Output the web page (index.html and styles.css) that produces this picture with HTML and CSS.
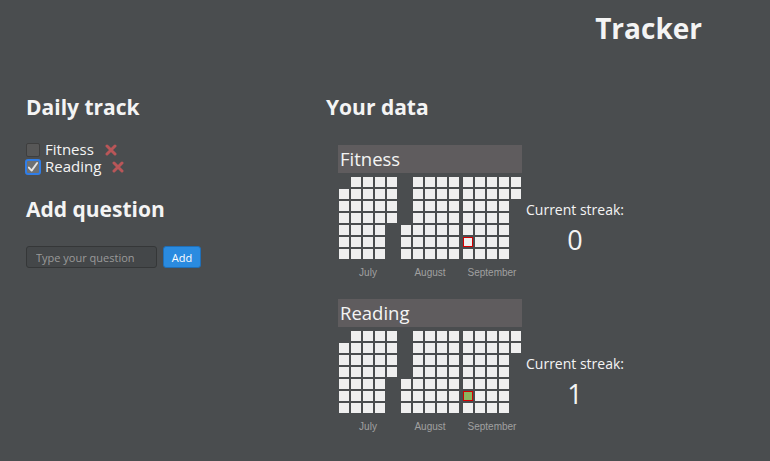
FILE: index.html
```html
<!DOCTYPE html>
<html>
<head>
<meta charset="utf-8">
<link rel="stylesheet" href="styles.css">
</head>
<body>
<header class="top">
  <h1 class="title">Tracker</h1>
</header>
<main class="main">
  <section class="left">
    <h2 class="heading">Daily track</h2>
    <ul class="items">
      <li class="item"><span class="box"></span><span class="item-label">Fitness</span><svg class="del" viewBox="0 0 12 12" width="12" height="12"><path d="M2 2 L10 10 M10 2 L2 10" stroke="#b95658" stroke-width="3" stroke-linecap="round"/></svg></li>
      <li class="item"><span class="box box-checked"><svg viewBox="0 0 14 14" width="14" height="14"><path d="M2.2 7.6 L5.4 11.2 L11.8 2.4" fill="none" stroke="#e6e6e6" stroke-width="2.2" stroke-linecap="round" stroke-linejoin="round"/></svg></span><span class="item-label">Reading</span><svg class="del" viewBox="0 0 12 12" width="12" height="12"><path d="M2 2 L10 10 M10 2 L2 10" stroke="#b95658" stroke-width="3" stroke-linecap="round"/></svg></li>
    </ul>
    <h2 class="heading heading-add">Add question</h2>
    <form class="add-form">
      <input class="q-input" type="text" placeholder="Type your question">
      <button class="add-btn" type="button">Add</button>
    </form>
  </section>
  <section class="right">
    <h2 class="heading">Your data</h2>
    <div class="chart-row">
      <div class="chart">
        <div class="chart-title">Fitness</div>
        <div class="months">
          <div class="month">
            <div class="grid">
              <i class="blank"></i>
              <i></i><i></i><i></i><i></i><i></i><i></i><i></i><i></i><i></i><i></i>
              <i></i><i></i><i></i><i></i><i></i><i></i><i></i><i></i><i></i><i></i>
              <i></i><i></i><i></i><i></i><i></i><i></i><i></i><i></i><i></i><i></i><i></i>
            </div>
            <div class="month-label">July</div>
          </div>
          <div class="month">
            <div class="grid">
              <i class="blank"></i><i class="blank"></i><i class="blank"></i><i class="blank"></i>
              <i></i><i></i><i></i><i></i><i></i><i></i><i></i><i></i><i></i><i></i>
              <i></i><i></i><i></i><i></i><i></i><i></i><i></i><i></i><i></i><i></i>
              <i></i><i></i><i></i><i></i><i></i><i></i><i></i><i></i><i></i><i></i><i></i>
            </div>
            <div class="month-label">August</div>
          </div>
          <div class="month">
            <div class="grid">
              <i></i><i></i><i></i><i></i><i></i><i class="today"></i><i></i><i></i><i></i><i></i>
              <i></i><i></i><i></i><i></i><i></i><i></i><i></i><i></i><i></i><i></i>
              <i></i><i></i><i></i><i></i><i></i><i></i><i></i><i></i><i></i><i></i>
            </div>
            <div class="month-label">September</div>
          </div>
        </div>
      </div>
      <div class="streak">
        <div class="streak-label">Current streak:</div>
        <div class="streak-value">0</div>
      </div>
    </div>
    <div class="chart-row">
      <div class="chart">
        <div class="chart-title">Reading</div>
        <div class="months">
          <div class="month">
            <div class="grid">
              <i class="blank"></i>
              <i></i><i></i><i></i><i></i><i></i><i></i><i></i><i></i><i></i><i></i>
              <i></i><i></i><i></i><i></i><i></i><i></i><i></i><i></i><i></i><i></i>
              <i></i><i></i><i></i><i></i><i></i><i></i><i></i><i></i><i></i><i></i><i></i>
            </div>
            <div class="month-label">July</div>
          </div>
          <div class="month">
            <div class="grid">
              <i class="blank"></i><i class="blank"></i><i class="blank"></i><i class="blank"></i>
              <i></i><i></i><i></i><i></i><i></i><i></i><i></i><i></i><i></i><i></i>
              <i></i><i></i><i></i><i></i><i></i><i></i><i></i><i></i><i></i><i></i>
              <i></i><i></i><i></i><i></i><i></i><i></i><i></i><i></i><i></i><i></i><i></i>
            </div>
            <div class="month-label">August</div>
          </div>
          <div class="month">
            <div class="grid">
              <i></i><i></i><i></i><i></i><i></i><i class="today done"></i><i></i><i></i><i></i><i></i>
              <i></i><i></i><i></i><i></i><i></i><i></i><i></i><i></i><i></i><i></i>
              <i></i><i></i><i></i><i></i><i></i><i></i><i></i><i></i><i></i><i></i>
            </div>
            <div class="month-label">September</div>
          </div>
        </div>
      </div>
      <div class="streak">
        <div class="streak-label">Current streak:</div>
        <div class="streak-value">1</div>
      </div>
    </div>
  </section>
</main>
</body>
</html>
```

FILE: styles.css
```css
html, body {
  margin: 0;
  padding: 0;
}
body {
  background: #4a4d4f;
  color: #f4f4f4;
  font-family: "Open Sans", "DejaVu Sans", sans-serif;
  width: 770px;
  height: 461px;
  overflow: hidden;
}
.top {
  display: flex;
  justify-content: flex-end;
  padding: 8px 68px 0 0;
  height: 48px;
}
.title {
  margin: 0;
  font-size: 28px;
  font-weight: 700;
  line-height: 40px;
}
.main {
  display: flex;
  padding: 36px 0 0 26px;
}
.left {
  width: 300px;
}
.heading {
  margin: 0;
  font-size: 21px;
  font-weight: 700;
  line-height: 30px;
}
.items {
  list-style: none;
  margin: 19px 0 0 0;
  padding: 0;
}
.item {
  display: flex;
  align-items: center;
  height: 17px;
  font-size: 15px;
  line-height: 17px;
}
.box {
  width: 14px;
  height: 14px;
  box-sizing: border-box;
  background: #575757;
  border: 1px solid #3e3e3e;
  border-radius: 2px;
  display: flex;
  align-items: center;
  justify-content: center;
  margin-right: 5px;
}
.box-checked {
  width: 16px;
  height: 16px;
  margin-left: -1px;
  margin-right: 4px;
  background: #6e7174;
  border: 2px solid #2f7de8;
  border-radius: 3px;
}
.box-checked svg {
  display: block;
}
.item-label {
  color: #f4f4f4;
}
.del {
  display: block;
  margin-left: 11px;
}
.heading-add {
  margin-top: 19px;
}
.add-form {
  display: flex;
  gap: 6px;
  margin-top: 22px;
}
.q-input {
  width: 131px;
  height: 22px;
  box-sizing: border-box;
  background: #444749;
  border: 1px solid #353738;
  border-radius: 3px;
  padding: 0 9px;
  font-family: "Open Sans", sans-serif;
  font-size: 11px;
  color: #ddd;
}
.q-input::placeholder {
  color: #9a9a9a;
}
.add-btn {
  width: 38px;
  height: 22px;
  background: #2a8be0;
  border: 1px solid #1f6fb8;
  border-radius: 3px;
  color: #fff;
  font-family: "Open Sans", sans-serif;
  font-size: 11px;
  padding: 0;
}
.right {
  display: flex;
  flex-direction: column;
}
.chart-row {
  display: flex;
  margin: 23px 0 0 12px;
}
.chart-row + .chart-row {
  margin-top: 20px;
}
.chart {
  width: 184px;
}
.chart-title {
  height: 28px;
  background: #5f5c5e;
  font-size: 18.5px;
  line-height: 28px;
  padding-left: 2px;
}
.months {
  display: flex;
  gap: 4px;
  margin-top: 4px;
  padding-left: 1px;
}
.grid {
  display: grid;
  grid-template-rows: repeat(7, 10px);
  grid-auto-columns: 10px;
  grid-auto-flow: column;
  gap: 2px;
  width: 58px;
}
.grid i {
  display: block;
  background: #efefef;
  box-sizing: border-box;
}
.grid i.blank {
  background: transparent;
}
.grid i.today {
  border: 1px solid #d40000;
}
.grid i.done {
  background: #8cb55e;
}
.month-label {
  text-align: center;
  font-family: "Liberation Sans", Arial, sans-serif;
  font-size: 10px;
  color: #a0a0a0;
  margin-top: 8px;
  line-height: 12px;
  white-space: nowrap;
}
.streak {
  margin: 56px 0 0 4px;
  text-align: center;
}
.streak-label {
  font-size: 14px;
  line-height: 18px;
}
.streak-value {
  font-size: 27px;
  line-height: 36px;
  margin-top: 3px;
}
```
